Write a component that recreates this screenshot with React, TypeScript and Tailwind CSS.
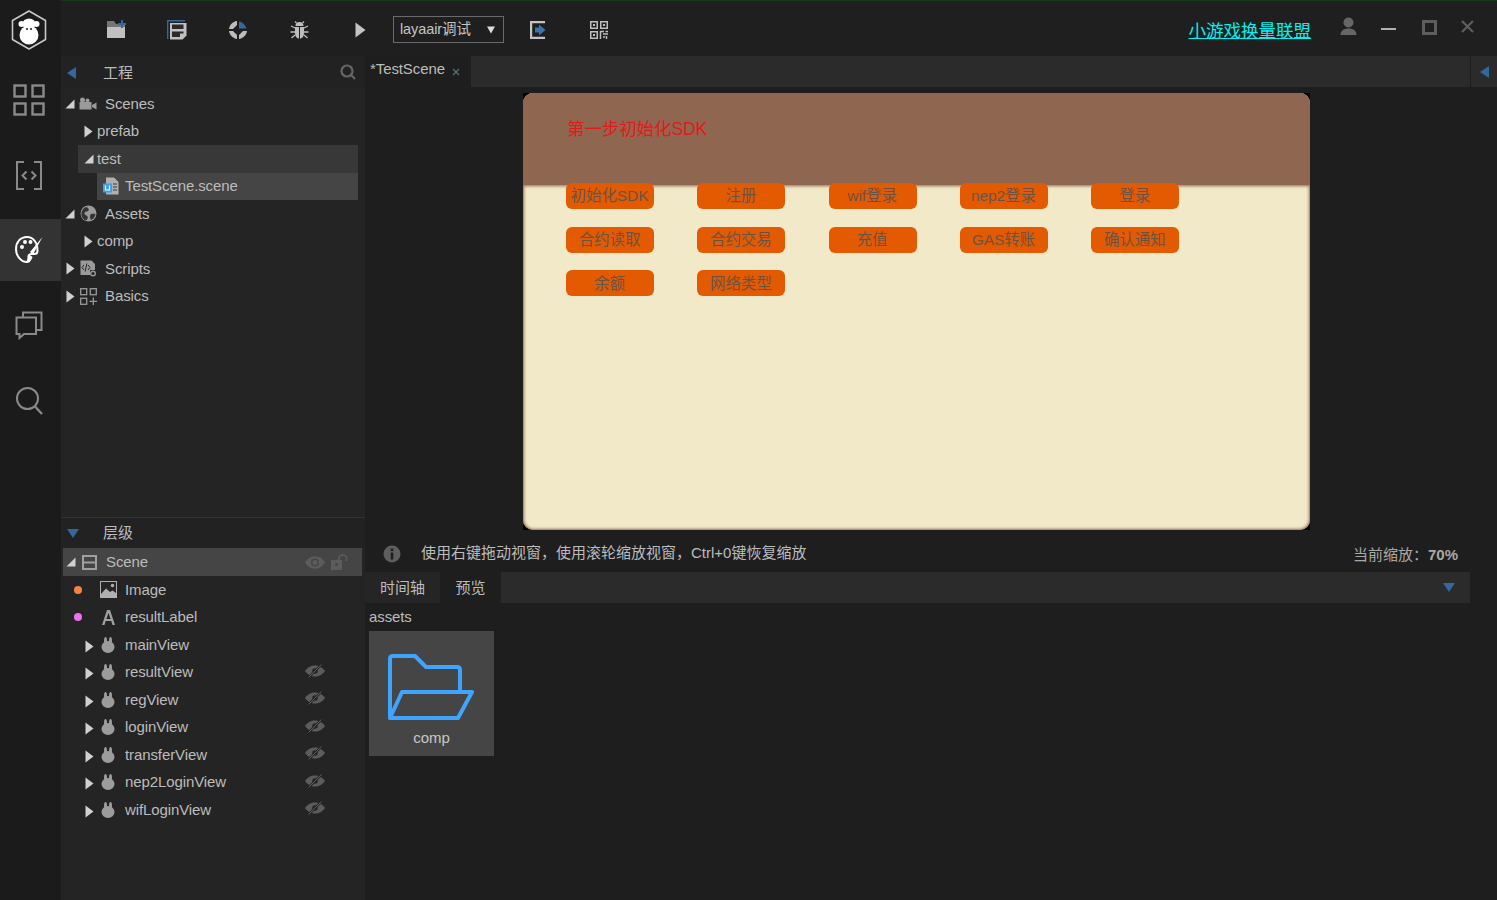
import type { ReactNode } from "react";

const FONT = "font-['Liberation_Sans','Noto_Sans_CJK_SC',sans-serif]";

function Arrow({ dir }: { dir: "right" | "corner" }) {
  if (dir === "corner") {
    return (
      <svg width="10" height="10" viewBox="0 0 10 10" className="shrink-0">
        <path d="M9.5 0.5V9.5H0.5Z" fill="#d0d0d0" />
      </svg>
    );
  }
  return (
    <svg width="9" height="13" viewBox="0 0 9 13" className="shrink-0">
      <path d="M0.5 0.5L8.5 6.5L0.5 12.5Z" fill="#d0d0d0" />
    </svg>
  );
}

function BlueArrow({ dir }: { dir: "left" | "down" }) {
  return dir === "left" ? (
    <svg width="9" height="12" viewBox="0 0 9 12" className="shrink-0">
      <path d="M9 0V12L0 6Z" fill="#34689c" />
    </svg>
  ) : (
    <svg width="12" height="9" viewBox="0 0 12 9" className="shrink-0">
      <path d="M0 0H12L6 9Z" fill="#34689c" />
    </svg>
  );
}

function Logo() {
  return (
    <svg width="36" height="40" viewBox="0 0 36 40">
      <path d="M18 1L34.5 10.5V29.5L18 39L1.5 29.5V10.5Z" fill="#1b1b1b" stroke="#c8c8c8" strokeWidth="1.6" strokeLinejoin="round" />
      <circle cx="10.5" cy="14" r="3" fill="#fff" />
      <circle cx="25.5" cy="14" r="3" fill="#fff" />
      <ellipse cx="18" cy="14" rx="6.5" ry="5.5" fill="#fff" />
      <circle cx="18" cy="25" r="9.5" fill="#fff" />
      <circle cx="16" cy="19" r="1" fill="#1b1b1b" />
      <circle cx="20" cy="19" r="1" fill="#1b1b1b" />
    </svg>
  );
}

function RailGrid() {
  return (
    <svg width="32" height="32" viewBox="0 0 32 32" fill="none" stroke="#8a8a8a" strokeWidth="2.4">
      <rect x="1.5" y="1.5" width="11" height="11" />
      <rect x="19.5" y="1.5" width="11" height="11" />
      <rect x="1.5" y="19.5" width="11" height="11" />
      <rect x="19.5" y="19.5" width="11" height="11" />
    </svg>
  );
}

function RailCode() {
  return (
    <svg width="26" height="29" viewBox="0 0 26 29" fill="none" stroke="#8a8a8a" strokeWidth="2">
      <path d="M8 1H1V28H8" />
      <path d="M18 1H25V28H18" />
      <path d="M10.5 10.5L6.5 14.5L10.5 18.5" />
      <path d="M15.5 10.5L19.5 14.5L15.5 18.5" />
    </svg>
  );
}

function RailPalette() {
  return (
    <svg width="28" height="30" viewBox="0 0 28 30">
      <path d="M12 2C5.5 2 1 7 1 14c0 7 5 13 11 13 3 0 3-2 2-4-1-2.5 0-4 2.5-4h3c2 0 3-1 3-3.5C22.5 7 18 2 12 2Z" fill="none" stroke="#fff" strokeWidth="2" />
      <circle cx="7" cy="12" r="2" fill="#fff" />
      <circle cx="10" cy="7" r="2" fill="#fff" />
      <circle cx="15.5" cy="7" r="2" fill="#fff" />
      <path d="M27.5 2L15 17l3 2.5Z" fill="#fff" />
      <path d="M14 19.5l3.5 2.5c-.5 3-3 5-6 5 1-2 .5-6 2.5-7.5Z" fill="#fff" />
    </svg>
  );
}

function RailChat() {
  return (
    <svg width="28" height="29" viewBox="0 0 28 29" fill="none" stroke="#8a8a8a" strokeWidth="2">
      <path d="M8 6V1.5H26.5V19H22" />
      <path d="M1.5 6.5H21V23H9L4.5 27V23H1.5Z" />
    </svg>
  );
}

function RailSearch() {
  return (
    <svg width="28" height="29" viewBox="0 0 28 29" fill="none" stroke="#8a8a8a" strokeWidth="2">
      <circle cx="12.5" cy="12.5" r="10.5" />
      <path d="M20 20.5L27 28" strokeWidth="2.4" />
    </svg>
  );
}

function ToolFolder() {
  return (
    <svg width="20" height="19" viewBox="0 0 20 19">
      <path d="M1 1H8L10 4H19V8H1Z" fill="#757575" />
      <path d="M1 7H19V18H1Z" fill="#c0c0c0" />
      <path d="M15 0V3H12V5H15V8H17V5H20V3H17V0Z" fill="#34689c" />
    </svg>
  );
}

function ToolSave() {
  return (
    <svg width="20" height="20" viewBox="0 0 20 20">
      <path d="M0.7 19V0.7H18" fill="none" stroke="#34689c" strokeWidth="1.4" />
      <path d="M3 3H19.5V15.5L15.5 19.5H3Z" fill="#c0c0c0" />
      <rect x="5" y="4.5" width="11.5" height="4.5" fill="#2a2a2a" />
      <path d="M5 11.5H16.5V13.5H13V17H5Z" fill="#2a2a2a" />
    </svg>
  );
}

function ToolPublish() {
  return (
    <svg width="18" height="18" viewBox="0 0 18 18">
      <path d="M8 0V4L4 8H0C0.5 4 3.5 0.5 8 0Z" fill="#bdbdbd" />
      <path d="M10 0.5C13.500 1 16.500 4 17.500 7.500H10Z" fill="#34689c" />
      <path d="M0 10H4L8 14V18C4 17.500 0.5 14 0 10Z" fill="#bdbdbd" />
      <path d="M10 14L14 10H18C17.5 14 14 17.5 10 18Z" fill="#bdbdbd" />
    </svg>
  );
}

function ToolBug() {
  return (
    <svg width="19" height="18" viewBox="0 0 19 18" fill="none" stroke="#bdbdbd" strokeWidth="1.3">
      <path d="M5.5 5C5.5 2.5 7 1 9.5 1S13.5 2.5 13.5 5Z" fill="#bdbdbd" stroke="none" />
      <path d="M5 6H9V17.5C6.5 17.5 5 15 5 12Z" fill="#bdbdbd" stroke="none" />
      <path d="M10 6H14V12C14 15 12.5 17.5 10 17.5Z" fill="#bdbdbd" stroke="none" />
      <path d="M5 7L1 5M14 7L18 5M5 11H0.5M14 11H18.5M5 14L1.5 17M14 14L17.5 17M6.5 2L5 0.5M12.5 2L14 0.5" />
    </svg>
  );
}

function ToolPlay() {
  return (
    <svg width="11" height="16" viewBox="0 0 11 16">
      <path d="M0.5 0.5L10.5 8L0.5 15.5Z" fill="#c4c4c4" />
    </svg>
  );
}

function ToolExport() {
  return (
    <svg width="16" height="18" viewBox="0 0 16 18">
      <path d="M15 1H1V17H15" fill="none" stroke="#c4c4c4" strokeWidth="2.4" />
      <path d="M5 6.5H9V3.5L15.5 9L9 14.5V11.5H5Z" fill="#3b74aa" />
    </svg>
  );
}

function ToolQr() {
  return (
    <svg width="18" height="18" viewBox="0 0 18 18" fill="none" stroke="#bdbdbd" strokeWidth="1.5">
      <rect x="0.75" y="0.75" width="6.5" height="6.5" />
      <rect x="10.75" y="0.75" width="6.5" height="6.5" />
      <rect x="0.75" y="10.75" width="6.5" height="6.5" />
      <rect x="3" y="3" width="2" height="2" fill="#bdbdbd" stroke="none" />
      <rect x="13" y="3" width="2" height="2" fill="#bdbdbd" stroke="none" />
      <rect x="3" y="13" width="2" height="2" fill="#bdbdbd" stroke="none" />
      <path d="M10.5 10.5H14M15.5 10.5H18M10.5 10V18M13 13H18M13 16H15M16.5 15V18" />
    </svg>
  );
}

function SceneFileIcon() {
  return (
    <svg width="16" height="18" viewBox="0 0 16 18">
      <path d="M3 0.5H11L15.5 5V17.5H3Z" fill="#b0b0b0" />
      <path d="M10 7H14M10 10H14M10 13H14" stroke="#3a3a3a" strokeWidth="1" />
      <rect x="0" y="6.5" width="9" height="9" fill="#3aa0f0" />
      <path d="M2.5 8.5V13H6.5V8.5" fill="none" stroke="#fff" strokeWidth="1.2" />
    </svg>
  );
}

function ScenesIcon() {
  return (
    <svg width="18" height="13" viewBox="0 0 18 13">
      <circle cx="3.5" cy="3" r="2.5" fill="#9a9a9a" />
      <circle cx="8.5" cy="3.5" r="2" fill="#9a9a9a" />
      <rect x="0.5" y="5" width="12" height="7.5" fill="#9a9a9a" />
      <path d="M13 8L17.5 5.5V12.5L13 10Z" fill="#9a9a9a" />
    </svg>
  );
}

function AssetsIcon() {
  return (
    <svg width="17" height="17" viewBox="0 0 17 17">
      <circle cx="8.5" cy="8.5" r="8" fill="#9a9a9a" />
      <path d="M6 2C8 2.5 9.5 4 8.5 5.500S5 6 4.500 8s2 2 3 3.500-.5 3-1.500 4C3 14.500 1 11.500 1.500 8 2 5 3.500 3 6 2ZM11 9c2-.5 3.500-.5 4.500 0-.5 3-2 5-4.500 6-1-1.500-1.500-5 0-6Z" fill="#333" />
    </svg>
  );
}

function ScriptsIcon() {
  return (
    <svg width="17" height="17" viewBox="0 0 17 17">
      <path d="M0.5 0.5H11.5L15 4V10H10V15H0.5Z" fill="#9a9a9a" />
      <path d="M4 5L2 7.5L4 10M8 5L10 7.5L8 10M6.8 3.5L5.2 11.5" fill="none" stroke="#262626" strokeWidth="1" />
      <circle cx="13" cy="13.5" r="2.3" fill="none" stroke="#9a9a9a" strokeWidth="1.4" />
    </svg>
  );
}

function BasicsIcon() {
  return (
    <svg width="17" height="17" viewBox="0 0 17 17" fill="none" stroke="#9a9a9a" strokeWidth="1.3">
      <rect x="0.7" y="0.7" width="6" height="6" />
      <rect x="10.3" y="0.7" width="6" height="6" />
      <rect x="0.7" y="10.3" width="6" height="6" />
      <path d="M13.3 9.5V17M9.5 13.3H17" />
    </svg>
  );
}

function SceneNodeIcon() {
  return (
    <svg width="15" height="15" viewBox="0 0 15 15" fill="none" stroke="#a0a0a0" strokeWidth="2">
      <rect x="1" y="1" width="13" height="13" />
      <path d="M1 7.5H14" />
    </svg>
  );
}

function ImageIcon() {
  return (
    <svg width="17" height="17" viewBox="0 0 17 17">
      <rect x="0.5" y="0.5" width="16" height="16" fill="#262626" stroke="#b0b0b0" />
      <path d="M1 13L6 7.5L10 11L12.5 9.5L16 12V16H1Z" fill="#b0b0b0" />
      <circle cx="12.5" cy="4.5" r="1.7" fill="#b0b0b0" />
    </svg>
  );
}

function LabelIcon() {
  return (
    <svg width="13" height="15" viewBox="0 0 13 15">
      <path d="M5 0H8L13 15H10.500L9.300 11H3.700L2.500 15H0ZM6.500 3L4.400 9H8.600Z" fill="#a0a0a0" />
    </svg>
  );
}

function RabbitIcon() {
  return (
    <svg width="14" height="16" viewBox="0 0 14 16">
      <ellipse cx="4.5" cy="3.5" rx="1.5" ry="3.5" fill="#9c9c9c" />
      <ellipse cx="9.5" cy="3.5" rx="1.5" ry="3.5" fill="#9c9c9c" />
      <ellipse cx="7" cy="10" rx="6.5" ry="6" fill="#9c9c9c" />
    </svg>
  );
}

function EyeIcon({ off }: { off?: boolean }) {
  if (off) {
    return (
      <svg width="20" height="14" viewBox="0 0 20 14">
        <path d="M0 7C3 3 6 1.5 10 1.5S17 3 20 7C17 11 14 12.5 10 12.5S3 11 0 7Z" fill="#5c5c5c" />
        <circle cx="10" cy="7" r="2.8" fill="#262626" />
        <path d="M3.5 13.5L16.5 0.5" stroke="#262626" strokeWidth="2.4" />
        <path d="M3.5 13.5L16.5 0.5" stroke="#5c5c5c" strokeWidth="1" />
      </svg>
    );
  }
  return (
    <svg width="20" height="13" viewBox="0 0 20 13">
      <path d="M0 6.5C3 2 6 0.5 10 0.5S17 2 20 6.5C17 11 14 12.5 10 12.5S3 11 0 6.5Z" fill="#5c5c5c" />
      <circle cx="10" cy="6.5" r="4" fill="#454545" />
      <circle cx="10" cy="6.5" r="2.5" fill="#5c5c5c" />
    </svg>
  );
}

function LockIcon() {
  return (
    <svg width="18" height="16" viewBox="0 0 18 16">
      <rect x="0" y="6" width="11" height="10" fill="#5c5c5c" />
      <circle cx="5.5" cy="10.5" r="1.5" fill="#454545" />
      <path d="M8 6V4C8 2 9.5 1 11.5 1S15.500 2 15.500 4V7" fill="none" stroke="#5c5c5c" strokeWidth="1.6" />
    </svg>
  );
}

function TreeHead({ open, icon, label }: { open: boolean; icon: ReactNode; label: string }) {
  return (
    <div className="flex h-[27.5px] items-center pl-[3px]">
      <span className="flex w-[12px] justify-center">
        <Arrow dir={open ? "corner" : "right"} />
      </span>
      <span className="ml-[3px] flex w-[18px] justify-center">{icon}</span>
      <span className="ml-[8px]">{label}</span>
    </div>
  );
}

function TreeFolder({ open, label, className }: { open: boolean; label: string; className?: string }) {
  return (
    <div className={`ml-[17px] mr-[7px] flex h-[27.5px] items-center pl-[4px] ${className ?? ""}`}>
      <span className="flex w-[13px] justify-center">
        <Arrow dir={open ? "corner" : "right"} />
      </span>
      <span className="ml-[2px]">{label}</span>
    </div>
  );
}

function LayerLeaf({ dot, icon, label }: { dot: string; icon: ReactNode; label: string }) {
  return (
    <div className="flex h-[27.5px] items-center">
      <span className={`ml-[13px] h-[8px] w-[8px] rounded-full ${dot}`} />
      <span className="ml-[16px] flex w-[20px] justify-center">{icon}</span>
      <span className="ml-[7px]">{label}</span>
    </div>
  );
}

function LayerNode({ label, hidden }: { label: string; hidden?: boolean }) {
  return (
    <div className="flex h-[27.5px] items-center">
      <span className="ml-[24px] mt-[3px] flex">
        <Arrow dir="right" />
      </span>
      <span className="ml-[7px] flex">
        <RabbitIcon />
      </span>
      <span className="ml-[10px] w-[180px]">{label}</span>
      {hidden && (
        <span className="-mt-[3px] flex">
          <EyeIcon off />
        </span>
      )}
    </div>
  );
}

const buttons = [
  ["初始化SDK", "注册", "wif登录", "nep2登录", "登录"],
  ["合约读取", "合约交易", "充值", "GAS转账", "确认通知"],
  ["余额", "网络类型"],
];

function GameButton({ label }: { label: string }) {
  return (
    <div className="flex h-[26px] w-[88px] items-center justify-center rounded-[6px] bg-[#e35a00] text-[15.5px] text-[#665347] blur-[0.4px]">
      {label}
    </div>
  );
}

export default function App() {
  return (
    <div className={`flex h-[900px] w-[1497px] overflow-hidden bg-[#1e1e1e] text-[15px] tracking-[-0.1px] text-[#bcbcbc] ${FONT}`}>
      {/* left rail */}
      <aside className="flex w-[61px] shrink-0 flex-col items-center bg-[#1b1b1b]">
        <div className="flex h-[59px] w-full items-center justify-center pr-[3px]">
          <Logo />
        </div>
        <div className="flex h-[82px] w-full items-center justify-center pr-[3px]">
          <RailGrid />
        </div>
        <div className="flex h-[78px] w-full items-center justify-center pb-[10px] pr-[3px]">
          <RailCode />
        </div>
        <div className="flex h-[62px] w-full items-center justify-center bg-[#333333] pr-[3px]">
          <RailPalette />
        </div>
        <div className="flex h-[88px] w-full items-center justify-center pr-[3px]">
          <RailChat />
        </div>
        <div className="flex h-[62px] w-full items-center justify-center pr-[3px]">
          <RailSearch />
        </div>
      </aside>

      <div className="flex min-w-0 flex-1 flex-col">
        {/* top bar */}
        <header className="flex h-[56px] shrink-0 items-center border-t border-[#123a18] bg-[#1f1f1f] pt-[2px]">
          <span className="ml-[45px] flex w-[61px]">
            <ToolFolder />
          </span>
          <span className="flex w-[61px]">
            <ToolSave />
          </span>
          <span className="ml-[1px] flex w-[61px]">
            <ToolPublish />
          </span>
          <span className="flex w-[65px]">
            <ToolBug />
          </span>
          <span className="flex w-[38px]">
            <ToolPlay />
          </span>
          <div className="flex h-[27px] w-[111px] items-center justify-between border border-[#6a6a6a] pl-[6px] pr-[8px] text-[14.5px] text-[#c4c4c4]">
            layaair调试
            <svg width="8" height="8" viewBox="0 0 8 8">
              <path d="M0 0.5H8L4 7.5Z" fill="#dddddd" />
            </svg>
          </div>
          <span className="ml-[26px] flex w-[60px]">
            <ToolExport />
          </span>
          <ToolQr />
          <a className="ml-auto mr-[29px] mt-[3px] text-[17.5px] tracking-normal text-[#00f2f2] underline">小游戏换量联盟</a>
          <svg width="17" height="19" viewBox="0 0 17 19" className="mr-[24px] mb-[7px]">
            <circle cx="8.5" cy="5.5" r="5" fill="#666666" />
            <path d="M0.5 18C0.5 13.5 4 11.5 8.5 11.5S16.5 13.5 16.5 18Z" fill="#666666" />
          </svg>
          <span className="mr-[26px] mb-[2px] h-[2px] w-[15px] bg-[#b0b0b0]" />
          <span className="mr-[24px] mb-[5px] h-[15px] w-[15px] border-[3px] border-[#5e5e5e]" />
          <svg width="13" height="13" viewBox="0 0 13 13" className="mr-[23px] mb-[6px]">
            <path d="M1 1L12 12M12 1L1 12" stroke="#5e5e5e" strokeWidth="2.2" />
          </svg>
        </header>

        <div className="flex min-h-0 flex-1">
          {/* left panels */}
          <section className="flex w-[304px] shrink-0 flex-col bg-[#242424]">
            <div className="flex h-[31px] shrink-0 items-center bg-[#222222] pl-[6px] pr-[9px]">
              <span className="mt-[2px] flex">
                <BlueArrow dir="left" />
              </span>
              <span className="ml-[27px] mt-[4px] tracking-normal">工程</span>
              <svg width="16" height="16" viewBox="0 0 16 16" className="ml-auto" fill="none" stroke="#666666" strokeWidth="2.2">
                <circle cx="7" cy="7" r="5.5" />
                <path d="M11 11L15 15" />
              </svg>
            </div>
            <div className="h-[430px] shrink-0 pt-[3px]">
              <TreeHead open icon={<ScenesIcon />} label="Scenes" />
              <TreeFolder open={false} label="prefab" />
              <TreeFolder open label="test" className="bg-[#383838]" />
              <div className="ml-[36px] mr-[7px] flex h-[27.5px] items-center bg-[#454545] pl-[6px]">
                <SceneFileIcon />
                <span className="ml-[6px]">TestScene.scene</span>
              </div>
              <TreeHead open icon={<AssetsIcon />} label="Assets" />
              <TreeFolder open={false} label="comp" />
              <TreeHead open={false} icon={<ScriptsIcon />} label="Scripts" />
              <TreeHead open={false} icon={<BasicsIcon />} label="Basics" />
            </div>
            <div className="flex h-[31px] shrink-0 items-center border-t border-[#333333] bg-[#222222] pl-[6px]">
              <BlueArrow dir="down" />
              <span className="ml-[24px] tracking-normal">层级</span>
            </div>
            <div className="flex-1">
              <div className="ml-[2px] mr-[3px] flex h-[28px] items-center bg-[#454545] pl-[3px]">
                <Arrow dir="corner" />
                <span className="ml-[6px] flex">
                  <SceneNodeIcon />
                </span>
                <span className="ml-[9px] w-[199px]">Scene</span>
                <EyeIcon />
                <span className="ml-[6px] flex">
                  <LockIcon />
                </span>
              </div>
              <LayerLeaf dot="bg-[#ff7f3f]" icon={<ImageIcon />} label="Image" />
              <LayerLeaf dot="bg-[#ee70ee]" icon={<LabelIcon />} label="resultLabel" />
              <LayerNode label="mainView" />
              <LayerNode label="resultView" hidden />
              <LayerNode label="regView" hidden />
              <LayerNode label="loginView" hidden />
              <LayerNode label="transferView" hidden />
              <LayerNode label="nep2LoginView" hidden />
              <LayerNode label="wifLoginView" hidden />
            </div>
          </section>

          {/* center */}
          <main className="flex min-w-0 flex-1 flex-col">
            <div className="flex h-[31px] shrink-0 bg-[#2b2b2b]">
              <div className="flex w-[106px] items-center bg-[#1e1e1e] pl-[5px] pb-[5px]">
                *TestScene
                <svg width="8" height="8" viewBox="0 0 8 8" className="ml-[7px] mt-[6px]">
                  <path d="M1 1L7 7M7 1L1 7" stroke="#5d6d78" strokeWidth="1.2" />
                </svg>
              </div>
              <div className="ml-auto flex w-[27px] items-center justify-center border-l border-[#1e1e1e]">
                <BlueArrow dir="left" />
              </div>
            </div>

            <div className="h-[454px] shrink-0 pl-[158px] pt-[6px]">
              <div className="h-[437px] w-[787px] overflow-hidden bg-black">
                <div className="flex h-full flex-col overflow-hidden rounded-[10px] bg-[#f2e9c9] shadow-[inset_0_0_3px_1px_#8f6750]">
                  <div className="h-[92px] shrink-0 bg-[#8f6750] pl-[44px] pt-[23px] text-[17.5px] text-[#e21a1a] shadow-[0_1px_3px_#8f6750]">
                    第一步初始化SDK
                  </div>
                  <div className="-mt-[2px] ml-[43px] flex flex-col gap-[17.6px]">
                    {buttons.map((row, i) => (
                      <div key={i} className="flex gap-[43.3px]">
                        {row.map((label) => (
                          <GameButton key={label} label={label} />
                        ))}
                      </div>
                    ))}
                  </div>
                </div>
              </div>
            </div>

            <div className="flex h-[31px] shrink-0 items-center pb-[6px] pl-[18px] pr-[39px]">
              <svg width="18" height="18" viewBox="0 0 18 18">
                <circle cx="9" cy="9" r="8.5" fill="#5e5e5e" />
                <rect x="7.7" y="3.5" width="2.6" height="2.6" fill="#1e1e1e" />
                <rect x="7.7" y="7.5" width="2.6" height="7" fill="#1e1e1e" />
              </svg>
              <span className="ml-[20px] tracking-normal">使用右键拖动视窗，使用滚轮缩放视窗，Ctrl+0键恢复缩放</span>
              <span className="ml-auto mt-[4px] tracking-normal text-[#a8a8a8]">
                当前缩放：<span className="font-bold">70%</span>
              </span>
            </div>

            <div className="mr-[27px] flex h-[31px] shrink-0 items-center bg-[#2b2b2b] tracking-normal">
              <div className="flex h-full w-[75px] items-center justify-center bg-[#252525] pt-[2px]">时间轴</div>
              <div className="flex h-full w-[61px] items-center justify-center bg-[#1e1e1e] pt-[2px]">预览</div>
              <span className="ml-auto mr-[15px] flex">
                <BlueArrow dir="down" />
              </span>
            </div>

            <div className="pl-[4px] pt-[5px]">
              <div className="h-[17px] leading-[17px]">assets</div>
              <div className="mt-[6px] flex h-[125px] w-[125px] flex-col items-center bg-[#454545] pt-[23px]">
                <svg width="88" height="68" viewBox="0 0 88 68" fill="none" stroke="#3fa4ff" strokeWidth="4" strokeLinejoin="round" className="mr-[3px]">
                  <path d="M4 63V5C4 3 5 2 7 2H29L40 13H71C73 13 74 14 74 16V38" />
                  <path d="M4 64H72L86 38H16Z" />
                </svg>
                <span className="mt-[5px] text-[#c8c8c8]">comp</span>
              </div>
            </div>
          </main>
        </div>
      </div>
    </div>
  );
}
